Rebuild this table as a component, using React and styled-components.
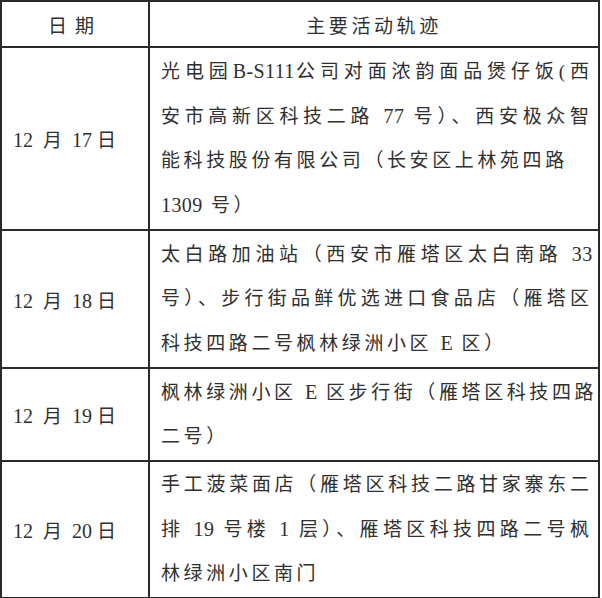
import React from "react";
import styled, { createGlobalStyle } from "styled-components";

const GlobalStyle = createGlobalStyle`
  html, body {
    margin: 0;
    padding: 0;
    background: #ffffff;
  }
  body {
    font-family: "Liberation Serif", "Noto Sans CJK SC", serif;
    color: #303030;
  }
`;

const Table = styled.table`
  border-collapse: collapse;
  width: 600px;
  margin: 0;
  table-layout: fixed;
  border: 2px solid #151515;
`;

const HeadCell = styled.th`
  height: 44px;
  padding: 0;
  border: 2px solid #2a2a2a;
  font-weight: normal;
  font-size: 19px;
  letter-spacing: ${(p) => p.$spacing || "3.6px"};
  text-align: center;
  vertical-align: middle;
  width: ${(p) => p.$width || "auto"};
`;

const DateCell = styled.td`
  border: 2px solid #2a2a2a;
  padding: 0 0 0 11px;
  font-size: 20px;
  white-space: nowrap;
  vertical-align: middle;
`;

const TrackCell = styled.td`
  border: 2px solid #2a2a2a;
  padding: 1px 9px 1px 11px;
  height: ${(p) => p.$height}px;
  font-size: 19px;
  line-height: 44px;
  letter-spacing: 3.6px;
  vertical-align: middle;
`;

const Line = styled.div`
  white-space: nowrap;
  text-align: ${(p) => (p.$fill ? "justify" : "left")};
  text-align-last: ${(p) => (p.$fill ? "justify" : "left")};
  margin-right: ${(p) => (p.$fill ? "-3.6px" : "0")};
`;

const Latin = styled.span`
  font-size: 20px;
  letter-spacing: 0.4px;
`;

const Unit = styled.span`
  font-size: 19px;
  margin: 0 ${(p) => p.$w}px;
`;

const rows = [
  {
    date: ["12", "17"],
    height: 177,
    lines: [
      { text: "光电园B-S111公司对面浓韵面品煲仔饭(西", fill: true },
      { text: "安市高新区科技二路 77 号）、西安极众智", fill: true },
      { text: "能科技股份有限公司（长安区上林苑四路" },
      { text: "1309 号）" },
    ],
  },
  {
    date: ["12", "18"],
    height: 131,
    lines: [
      { text: "太白路加油站（西安市雁塔区太白南路 33", fill: true },
      { text: "号）、步行街品鲜优选进口食品店（雁塔区", fill: true },
      { text: "科技四路二号枫林绿洲小区 E 区）" },
    ],
  },
  {
    date: ["12", "19"],
    height: 86,
    lines: [
      { text: "枫林绿洲小区 E 区步行街（雁塔区科技四路", fill: true },
      { text: "二号）" },
    ],
  },
  {
    date: ["12", "20"],
    height: 129,
    lines: [
      { text: "手工菠菜面店（雁塔区科技二路甘家寨东二", fill: true },
      { text: "排 19 号楼 1 层）、雁塔区科技四路二号枫", fill: true },
      { text: "林绿洲小区南门" },
    ],
  },
];

// latin / digit runs keep their natural spacing, only the hanzi are spread
function Spaced({ text }) {
  const parts = text.split(/([A-Za-z0-9\-]+)/);
  return parts.map((p, i) =>
    /^[A-Za-z0-9\-]+$/.test(p) ? <Latin key={i}>{p}</Latin> : p
  );
}

function DateText({ parts }) {
  return (
    <>
      {parts[0]}
      <Unit $w={10}>月</Unit>
      {parts[1]}
      <Unit $w={5}>日</Unit>
    </>
  );
}

export default function App() {
  return (
    <>
      <GlobalStyle />
      <Table>
        <thead>
          <tr>
            <HeadCell $width="146px" $spacing="8px">日期</HeadCell>
            <HeadCell>主要活动轨迹</HeadCell>
          </tr>
        </thead>
        <tbody>
          {rows.map((row) => (
            <tr key={row.date[1]}>
              <DateCell>
                <DateText parts={row.date} />
              </DateCell>
              <TrackCell $height={row.height}>
                {row.lines.map((line, i) => (
                  <Line key={i} $fill={line.fill}>
                    <Spaced text={line.text} />
                  </Line>
                ))}
              </TrackCell>
            </tr>
          ))}
        </tbody>
      </Table>
    </>
  );
}
